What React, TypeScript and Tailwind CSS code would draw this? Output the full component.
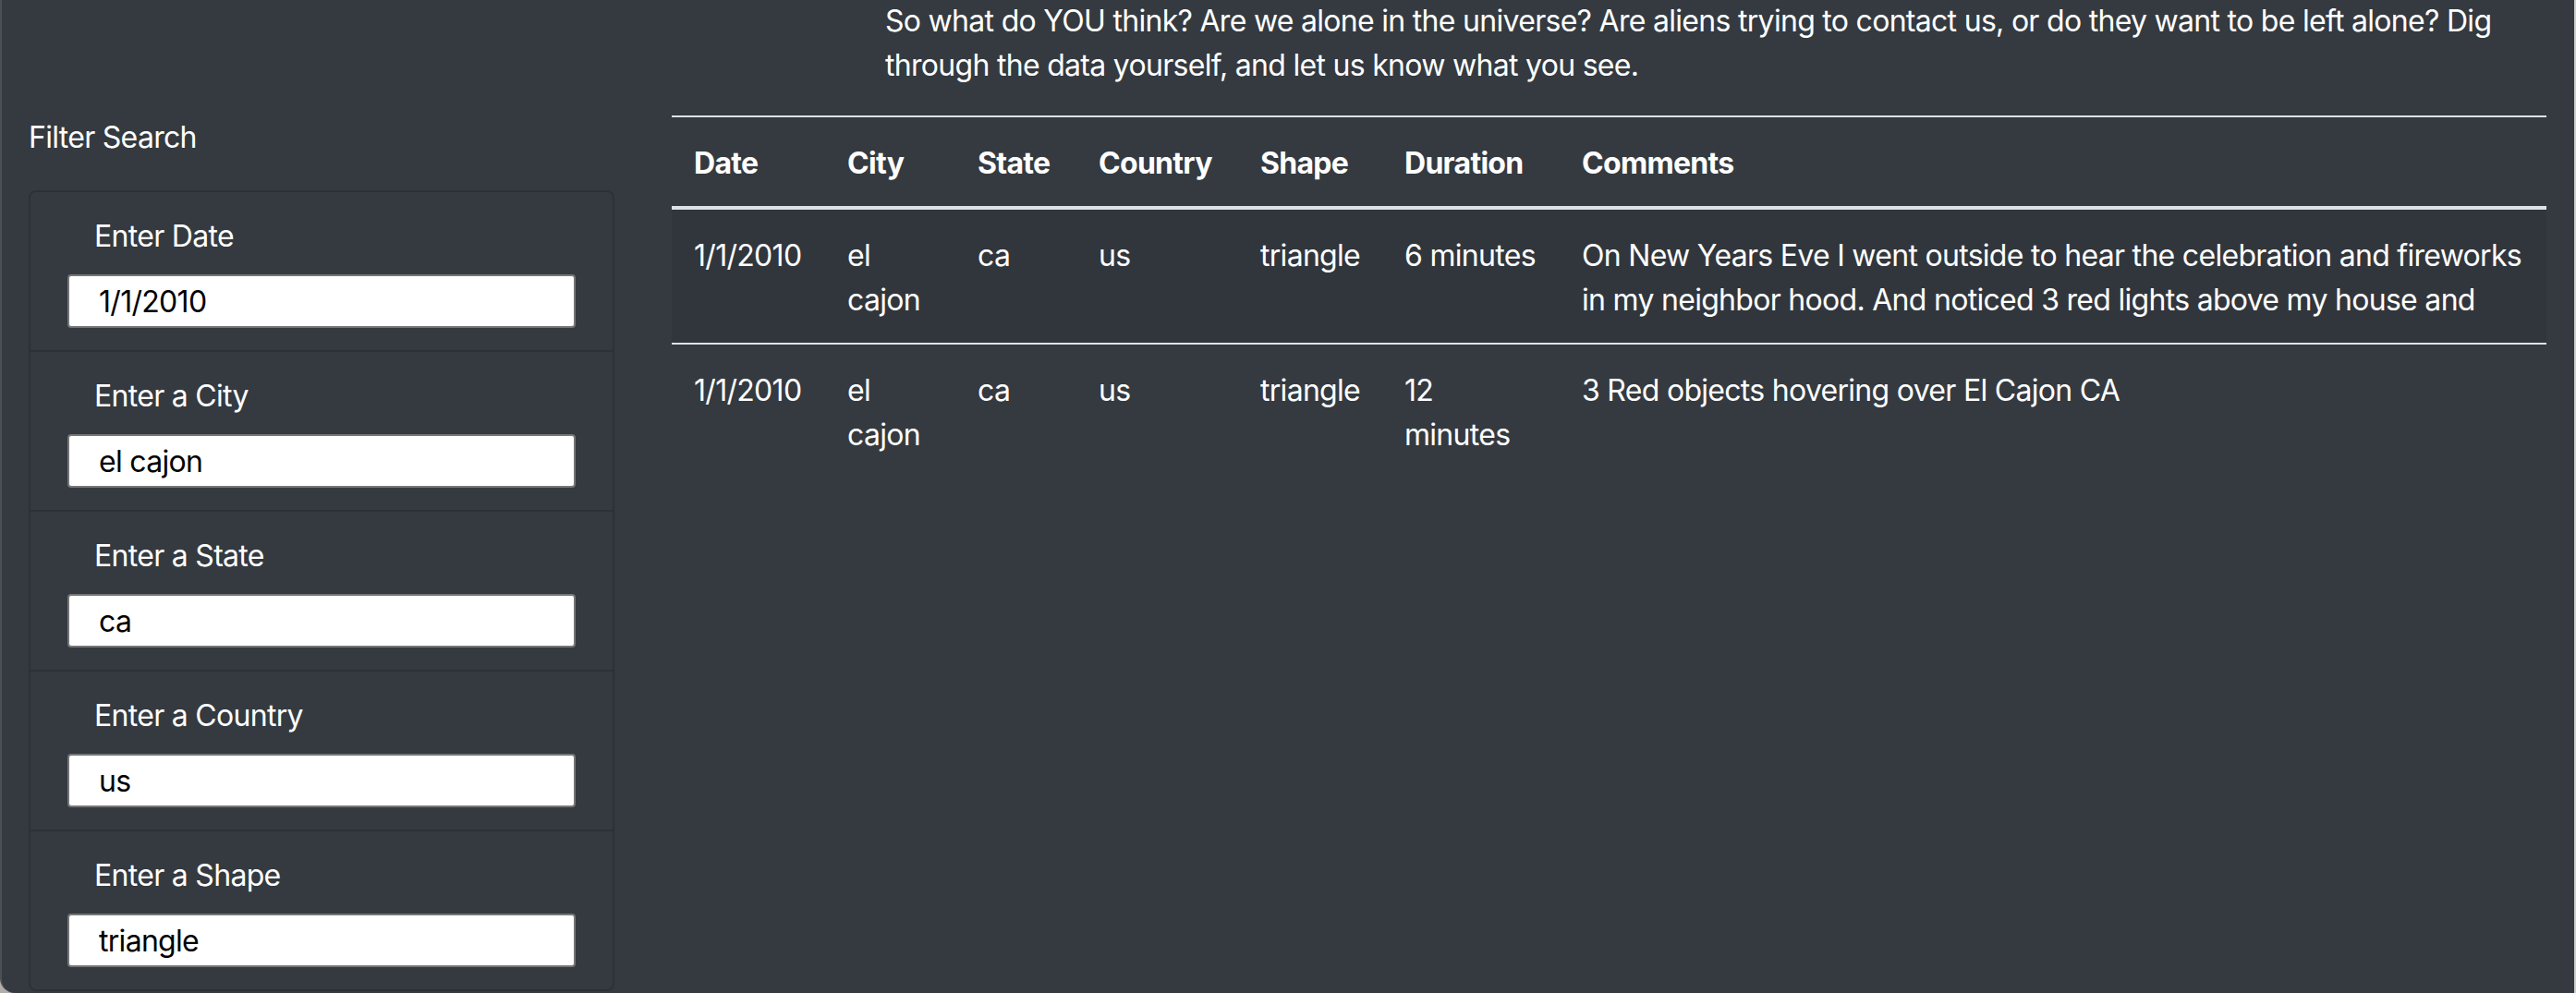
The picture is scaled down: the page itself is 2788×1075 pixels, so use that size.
import React from "react";

const filters = [
  { label: "Enter Date", value: "1/1/2010" },
  { label: "Enter a City", value: "el cajon" },
  { label: "Enter a State", value: "ca" },
  { label: "Enter a Country", value: "us" },
  { label: "Enter a Shape", value: "triangle" },
];

const rows = [
  {
    date: "1/1/2010",
    city: "el cajon",
    state: "ca",
    country: "us",
    shape: "triangle",
    duration: "6 minutes",
    comments:
      "On New Years Eve I went outside to hear the celebration and fireworks in my neighbor hood. And noticed 3 red lights above my house and",
  },
  {
    date: "1/1/2010",
    city: "el cajon",
    state: "ca",
    country: "us",
    shape: "triangle",
    duration: "12 minutes",
    comments: "3 Red objects hovering over El Cajon CA",
  },
];

const cols = [
  { key: "date", title: "Date", w: "w-[166px]", pad: "px-[24px]" },
  { key: "city", title: "City", w: "w-[141px]", pad: "px-[24px]" },
  { key: "state", title: "State", w: "w-[131px]", pad: "px-[24px]" },
  { key: "country", title: "Country", w: "w-[175px]", pad: "px-[24px]" },
  { key: "shape", title: "Shape", w: "w-[156px]", pad: "px-[24px]" },
  { key: "duration", title: "Duration", w: "w-[192px]", pad: "px-[24px]" },
  { key: "comments", title: "Comments", w: "w-auto", pad: "pl-[24px] pr-0" },
] as const;

export default function App() {
  return (
    <div className="h-[1075px] w-[2788px] overflow-hidden bg-[#b3aea8]">
      <div
        className="flex h-full w-full overflow-hidden rounded-bl-[16px] border-l-2 border-r-2 border-l-[#4a5056] border-r-[#cfd0d1] bg-[#343a40] text-[32px] leading-[48px] tracking-[-0.022em] text-white"
        style={{ fontFamily: "Inter, 'Liberation Sans', sans-serif" }}
      >
        {/* filter column */}
        <aside className="w-[695px] shrink-0 pl-[29px] pr-[32px] pt-[125px]">
          <p className="mb-[33px]">Filter Search</p>
          <ul className="overflow-hidden rounded-[8px] border-2 border-[#2c3136]">
            {filters.map((f) => (
              <li
                key={f.label}
                className="border-b-2 border-[#2c3136] px-[40px] py-[24px] last:border-b-0"
              >
                <label className="mb-[17px] block pl-[29px]">{f.label}</label>
                <input
                  type="text"
                  defaultValue={f.value}
                  className="block h-[58px] w-full rounded-[4px] border-2 border-[#767676] bg-white px-[32px] text-[32px] tracking-[-0.022em] text-black outline-none"
                />
              </li>
            ))}
          </ul>
        </aside>

        {/* results column */}
        <main className="flex-1 pl-[30px] pr-[28px]">
          <p className="-mt-px mb-[30px] pl-[231px]">
            So what do YOU think? Are we alone in the universe? Are aliens trying to contact us, or
            do they want to be left alone? Dig through the data yourself, and let us know what you
            see.
          </p>
          <table className="w-[2029px] table-fixed border-collapse text-left">
            <thead>
              <tr>
                {cols.map((c) => (
                  <th
                    key={c.key}
                    className={`${c.w} ${c.pad} border-t-2 border-b-4 border-[#dee2e6] pt-[26px] pb-[22px] align-bottom font-bold`}
                  >
                    {c.title}
                  </th>
                ))}
              </tr>
            </thead>
            <tbody>
              {rows.map((r, i) => (
                <tr key={i} className={i % 2 === 0 ? "bg-[#31363c]" : ""}>
                  {cols.map((c) => (
                    <td
                      key={c.key}
                      className={`${c.pad} border-t-2 border-[#dee2e6] pt-[26px] pb-[22px] align-top ${
                        i === 0 ? "border-t-0" : ""
                      } ${c.key === "duration" && r.duration.length < 10 ? "whitespace-nowrap" : ""}`}
                    >
                      {r[c.key]}
                    </td>
                  ))}
                </tr>
              ))}
            </tbody>
          </table>
        </main>
      </div>
    </div>
  );
}
